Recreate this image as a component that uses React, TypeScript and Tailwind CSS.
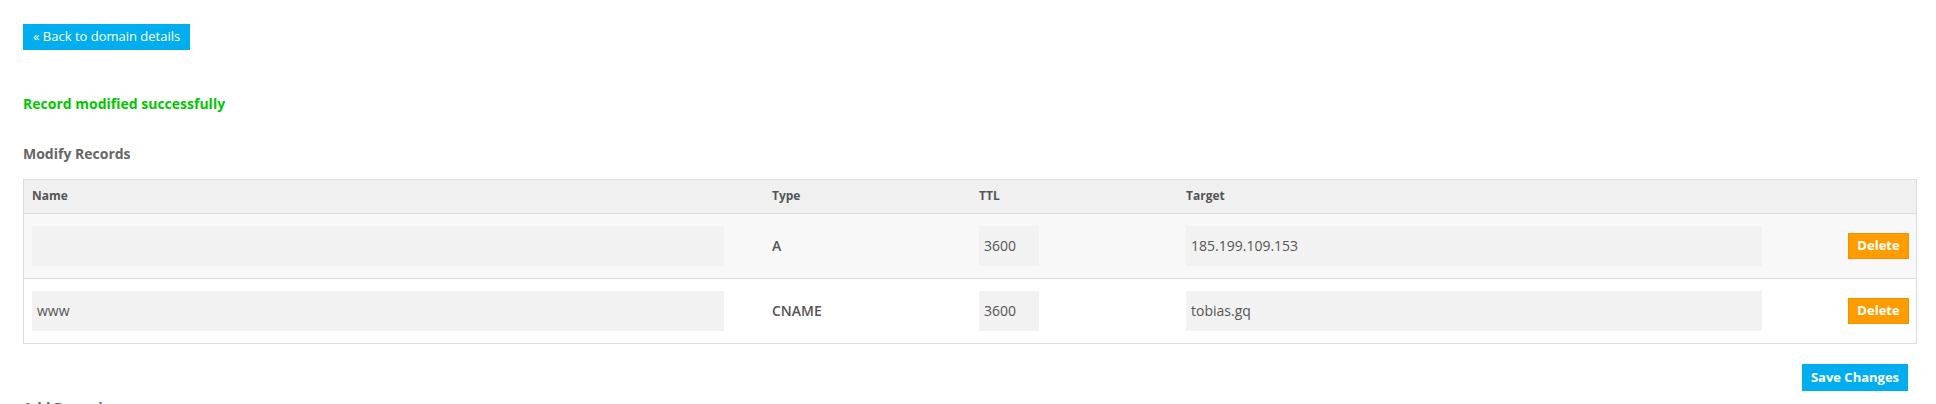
const records = [
  { id: 1, name: '', type: 'A', ttl: '3600', target: '185.199.109.153' },
  { id: 2, name: 'www', type: 'CNAME', ttl: '3600', target: 'tobias.gq' },
];

const App = () => {
  return (
    <div className="min-h-screen bg-white pl-[23px] pr-[19px] pt-[23px] font-['Open_Sans',sans-serif] text-[#555]">
      <button className="h-[26px] bg-[#00aeef] px-[10px] text-[13px] text-white">
        &laquo; Back to domain details
      </button>

      <p className="mt-[44px] text-[14px] font-bold leading-[19px] text-[#00c800]">
        Record modified successfully
      </p>

      <h3 className="mt-[31px] text-[14px] font-bold leading-[19px] text-[#666]">Modify Records</h3>

      <div className="mt-[16px] border border-[#ddd]">
        <div className="grid h-[34px] grid-cols-[740px_207px_207px_1fr] items-center border-b border-[#ddd] bg-[#f0f0f0] text-[12px] font-bold">
          <div className="pl-[8px]">Name</div>
          <div className="pl-[8px]">Type</div>
          <div className="pl-[8px]">TTL</div>
          <div className="pl-[8px]">Target</div>
        </div>

        {records.map((record, i) => (
          <div
            key={record.id}
            className={`grid grid-cols-[740px_207px_207px_1fr] items-center text-[14px] ${
              i === 0 ? 'h-[65px] border-b border-[#ddd] bg-[#f8f8f8]' : 'h-[64px] bg-white'
            }`}
          >
            <div className="pl-[8px]">
              <input
                defaultValue={record.name}
                className="h-[40px] w-[692px] bg-[#f2f2f2] px-[5px] text-[#555] outline-none"
              />
            </div>
            <div className="pl-[8px] font-semibold">{record.type}</div>
            <div className="pl-[8px]">
              <input
                defaultValue={record.ttl}
                className="h-[40px] w-[60px] bg-[#f2f2f2] px-[5px] text-[#555] outline-none"
              />
            </div>
            <div className="flex items-center justify-between pl-[8px] pr-[7px]">
              <input
                defaultValue={record.target}
                className="h-[40px] w-[576px] bg-[#f2f2f2] px-[5px] text-[#555] outline-none"
              />
              <button className="h-[26px] w-[61px] border border-[#f29100] bg-[#ff9c00] text-[13px] font-bold text-white">
                Delete
              </button>
            </div>
          </div>
        ))}
      </div>

      <div className="mt-[20px] flex justify-end pr-[9px]">
        <button className="h-[27px] w-[106px] bg-[#00aeef] text-[13px] font-bold text-white">Save Changes</button>
      </div>

      <h3 className="mt-[7px] text-[14px] font-bold leading-[19px] text-[#666]">Add Records</h3>
    </div>
  );
};

export default App;
